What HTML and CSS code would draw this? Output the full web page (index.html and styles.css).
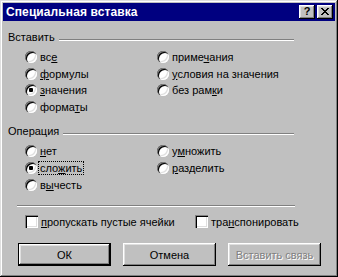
FILE: index.html
```html
<!DOCTYPE html>
<html lang="ru">
<head>
<meta charset="utf-8">
<title>Специальная вставка</title>
<link rel="stylesheet" href="styles.css">
</head>
<body>
<div class="window">
  <div class="titlebar">
    <span class="title">Специальная вставка</span>
    <div class="tbtns">
      <span class="tbtn">?</span>
      <span class="tbtn close">
        <svg width="8" height="7" viewBox="0 0 8 7"><path d="M0 0h2v1h1v1h2v-1h1v-1h2v1h-1v1h-1v1h-1v1h1v1h1v1h1v1h-2v-1h-1v-1h-2v1h-1v1h-2v-1h1v-1h1v-1h1v-1h-1v-1h-1v-1h-1z" fill="#000"/></svg>
      </span>
    </div>
  </div>
  <div class="body">
    <div class="ghead"><span class="glabel">Вставить</span><span class="gline"></span></div>
    <div class="opts paste">
      <label class="opt"><span class="radio"></span><span>вс<u>е</u></span></label>
      <label class="opt"><span class="radio"></span><span><u>ф</u>ормулы</span></label>
      <label class="opt"><span class="radio on"></span><span><u>з</u>начения</span></label>
      <label class="opt"><span class="radio"></span><span>форма<u>т</u>ы</span></label>
      <label class="opt"><span class="radio"></span><span>приме<u>ч</u>ания</span></label>
      <label class="opt"><span class="radio"></span><span><u>у</u>словия на значения</span></label>
      <label class="opt"><span class="radio"></span><span>без рам<u>к</u>и</span></label>
    </div>
    <div class="ghead op"><span class="glabel">Операция</span><span class="gline"></span></div>
    <div class="opts oper">
      <label class="opt"><span class="radio"></span><span><u>н</u>ет</span></label>
      <label class="opt"><span class="radio on"></span><span class="focus">сло<u>ж</u>ить</span></label>
      <label class="opt"><span class="radio"></span><span>в<u>ы</u>честь</span></label>
      <label class="opt"><span class="radio"></span><span>у<u>м</u>ножить</span></label>
      <label class="opt"><span class="radio"></span><span><u>р</u>азделить</span></label>
    </div>
    <div class="sep"></div>
    <div class="checks">
      <label class="opt"><span class="check"></span><span><u>п</u>ропускать пустые ячейки</span></label>
      <label class="opt"><span class="check"></span><span>тра<u>н</u>спонировать</span></label>
    </div>
    <div class="buttons">
      <span class="btn default">ОК</span>
      <span class="btn">Отмена</span>
      <span class="btn disabled">Вставить связь</span>
    </div>
  </div>
</div>
</body>
</html>
```
FILE: styles.css
```css
* { box-sizing: border-box; }
html, body { margin: 0; padding: 0; }
body {
  width: 338px;
  height: 277px;
  overflow: hidden;
  background: #c0c0c0;
  font-family: "Liberation Sans", Arial, sans-serif;
  font-size: 11px;
  color: #000;
}
.window {
  width: 338px;
  height: 277px;
  padding: 3px;
  background: #c0c0c0;
  box-shadow: inset -1px -1px 0 #000, inset 1px 1px 0 #dfdfdf, inset -2px -2px 0 #808080, inset 2px 2px 0 #fff;
  display: flex;
  flex-direction: column;
}
.titlebar {
  height: 18px;
  background: #000080;
  display: flex;
  align-items: center;
  justify-content: space-between;
  padding: 0 2px 0 3px;
}
.title {
  color: #fff;
  font-weight: bold;
  font-size: 12px;
  letter-spacing: 0.1px;
}
.tbtns { display: flex; gap: 2px; }
.tbtn {
  width: 16px;
  height: 14px;
  background: #c0c0c0;
  box-shadow: inset -1px -1px 0 #000, inset 1px 1px 0 #fff, inset -2px -2px 0 #808080, inset 2px 2px 0 #dfdfdf;
  display: flex;
  align-items: center;
  justify-content: center;
  font-weight: bold;
  font-size: 11px;
  line-height: 1;
  padding-bottom: 1px;
}
.tbtn svg { display: block; }
.body {
  padding: 10px 5px 0 5px;
  flex: 1;
}
.ghead {
  display: flex;
  height: 13px;
  line-height: 13px;
  width: 286px;
}
.ghead.op { margin-top: 10px; }
.gline {
  flex: 1;
  height: 2px;
  margin: 8px 0 0 4px;
  border-top: 1px solid #808080;
  border-bottom: 1px solid #fff;
}
.opts {
  display: grid;
  grid-auto-flow: column;
  grid-template-columns: 132px 1fr;
  padding-left: 17px;
}
.paste { grid-template-rows: repeat(4, 16.5px); margin-top: 5px; }
.oper { grid-template-rows: repeat(3, 17px); margin-top: 4px; }
.opt {
  display: flex;
  align-items: center;
  gap: 3px;
  white-space: nowrap;
}
u { text-decoration: underline; text-underline-offset: 1px; }
.radio {
  position: relative;
  width: 12px;
  height: 12px;
  flex: none;
  border-radius: 50%;
  background: #fff;
  box-shadow: inset 1px 1px 0 #808080, inset 2px 2px 0 #000, inset -1px -1px 0 #fff, inset -2px -2px 0 #dfdfdf;
}
.radio.on::after {
  content: "";
  position: absolute;
  left: 4px;
  top: 4px;
  width: 4px;
  height: 4px;
  border-radius: 1px;
  background: #000;
}
.focus {
  outline: 1px dotted #000;
  outline-offset: 0;
  padding: 0 1px;
  margin-left: -1px;
  line-height: 12px;
}
.sep {
  margin: 12px 0 0 9px;
  width: 278px;
  height: 2px;
  border-top: 1px solid #808080;
  border-bottom: 1px solid #fff;
}
.checks {
  display: grid;
  grid-template-columns: 170px 1fr;
  padding-left: 17px;
  margin-top: 8px;
  height: 13px;
}
.check {
  width: 13px;
  height: 13px;
  flex: none;
  background: #fff;
  box-shadow: inset 1px 1px 0 #808080, inset 2px 2px 0 #000, inset -1px -1px 0 #fff, inset -2px -2px 0 #dfdfdf;
}
.buttons {
  display: flex;
  gap: 12px;
  margin: 15px 0 0 10px;
}
.btn {
  width: 93px;
  height: 23px;
  display: flex;
  align-items: center;
  justify-content: center;
  background: #c0c0c0;
  box-shadow: inset -1px -1px 0 #000, inset 1px 1px 0 #fff, inset -2px -2px 0 #808080, inset 2px 2px 0 #dfdfdf;
}
.btn.default {
  border: 1px solid #000;
  box-shadow: inset -1px -1px 0 #000, inset 1px 1px 0 #fff, inset -2px -2px 0 #808080, inset 2px 2px 0 #dfdfdf;
}
.btn.disabled {
  color: #808080;
  text-shadow: 1px 1px 0 #fff;
}
```
